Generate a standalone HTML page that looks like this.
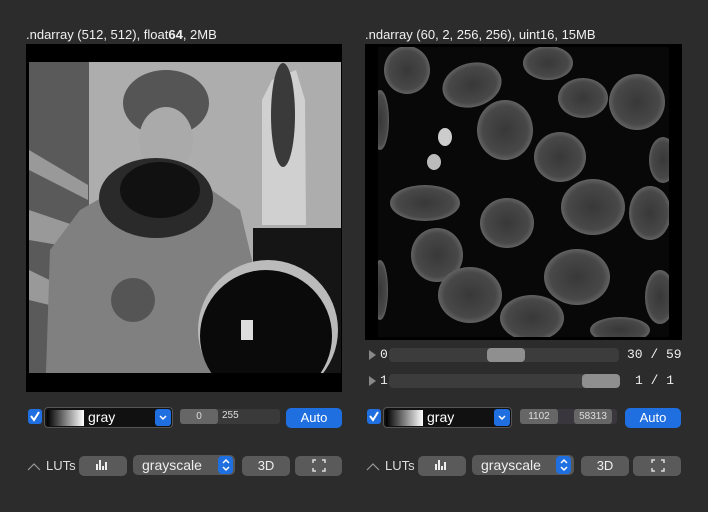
<!DOCTYPE html>
<html><head><meta charset="utf-8"><style>
*{margin:0;padding:0;box-sizing:border-box}
body{width:708px;height:512px;background:#2c2c2c;position:relative;overflow:hidden;font-family:"Liberation Sans",sans-serif;color:#e8e8e8}
.a{position:absolute}
.t{font-size:13px;color:#f0f0f0;top:27px}
.box{background:#000}
.cb{width:14px;height:15px;background:#1f6fe0;border-radius:3px}
.cm{height:21px;border:1px solid #555;border-radius:4px;background:#111}
.gr{background:linear-gradient(90deg,#000,#fff);}
.gt{font-size:14px;color:#fff}
.bb{background:#1f6fe0;border-radius:3px}
.trk{background:#3a3a3a;border-radius:3px}
.hd{background:#666;border-radius:3px;font-size:10px;color:#ddd;text-align:center;line-height:15px}
.auto{background:#1f6fe0;border-radius:5px;color:#fff;font-size:13px;text-align:center;line-height:20px}
.btn{background:#5a5a5a;border-radius:5px;color:#eee;font-size:13px;text-align:center;line-height:20px;height:20px}
.sel{background:#575757;border-radius:5px;color:#eee;font-size:14px;line-height:20px;height:20px;padding-left:9px}
.sl{background:#3c3c3c;border-radius:4px;height:14px}
.sh{background:#8f8f8f;border-radius:4px;height:14px}
.mono{font-family:"Liberation Mono",monospace;font-size:13px;color:#eee}
</style></head><body>
<div class="a t" style="left:26px">.ndarray (512, 512), float<b>64</b>, 2MB</div>
<div class="a t" style="left:365px">.ndarray (60, 2, 256, 256), uint16, 15MB</div>

<div class="a box" style="left:26px;top:44px;width:316px;height:348px"></div>
<svg class="a" style="left:0;top:0" width="708" height="512">
<defs>
<radialGradient id="n" cx="50%" cy="50%" r="50%"><stop offset="0" stop-color="#383838"/><stop offset="0.8" stop-color="#484848"/><stop offset="1" stop-color="#626262"/></radialGradient>
<clipPath id="c1"><rect x="29" y="62" width="312" height="311"/></clipPath>
<clipPath id="c2"><rect x="378" y="47" width="291" height="290"/></clipPath>
</defs>
<g clip-path="url(#c1)">
<rect x="29" y="62" width="312" height="311" fill="#adadad"/>
<rect x="29" y="62" width="60" height="311" fill="#5a5a5a"/>
<path d="M29 150 L88 185 L88 200 L29 170Z M29 210 L88 230 L88 250 L29 240Z M29 270 L70 290 L70 310 L29 300Z" fill="#999"/>
<rect x="253" y="228" width="88" height="145" fill="#151515"/>
<path d="M262 225 L262 100 L272 80 L296 70 L305 100 L306 225Z" fill="#d0d0d0"/>
<ellipse cx="283" cy="115" rx="12" ry="52" fill="#3a3a3a"/>
<path d="M46 373 L50 250 L80 210 L115 190 L200 182 L240 210 L252 260 L253 373Z" fill="#808080"/>
<ellipse cx="166" cy="103" rx="43" ry="33" fill="#555"/>
<ellipse cx="166" cy="140" rx="27" ry="33" fill="#aaa"/>
<ellipse cx="156" cy="198" rx="57" ry="40" fill="#2a2a2a"/>
<ellipse cx="160" cy="190" rx="40" ry="28" fill="#111"/>
<circle cx="133" cy="300" r="22" fill="#555"/>
<circle cx="268" cy="330" r="70" fill="#bbb"/>
<circle cx="266" cy="336" r="66" fill="#0a0a0a"/>
<rect x="241" y="320" width="12" height="20" fill="#ddd"/>
</g>
<rect x="365" y="44" width="317" height="296" fill="#000"/>
<g clip-path="url(#c2)">
<rect x="378" y="47" width="291" height="290" fill="#080808"/>
<g fill="url(#n)">
<ellipse cx="407" cy="70" rx="23" ry="24"/>
<ellipse cx="472" cy="85" rx="30" ry="22" transform="rotate(-15 472 85)"/>
<ellipse cx="548" cy="63" rx="25" ry="17"/>
<ellipse cx="583" cy="98" rx="25" ry="20"/>
<ellipse cx="637" cy="102" rx="28" ry="28"/>
<ellipse cx="505" cy="130" rx="28" ry="30"/>
<ellipse cx="560" cy="157" rx="26" ry="25"/>
<ellipse cx="663" cy="160" rx="14" ry="23"/>
<ellipse cx="425" cy="203" rx="35" ry="18"/>
<ellipse cx="507" cy="223" rx="27" ry="25"/>
<ellipse cx="593" cy="207" rx="32" ry="28"/>
<ellipse cx="650" cy="213" rx="21" ry="27"/>
<ellipse cx="437" cy="255" rx="26" ry="27"/>
<ellipse cx="577" cy="277" rx="33" ry="28"/>
<ellipse cx="470" cy="295" rx="32" ry="28"/>
<ellipse cx="532" cy="318" rx="32" ry="23"/>
<ellipse cx="660" cy="297" rx="15" ry="27"/>
<ellipse cx="620" cy="330" rx="30" ry="13"/>
<ellipse cx="380" cy="120" rx="9" ry="30"/>
<ellipse cx="380" cy="290" rx="8" ry="30"/>
</g>
<ellipse cx="445" cy="137" rx="7" ry="9" fill="#ccc"/>
<ellipse cx="434" cy="162" rx="7" ry="8" fill="#bbb"/>
</g>
</svg>

<!-- sliders -->
<div class="a mono" style="left:380px;top:347px">0</div>
<div class="a sl" style="left:389px;top:348px;width:230px"></div>
<div class="a sh" style="left:487px;top:348px;width:38px"></div>
<div class="a mono" style="left:627px;top:347px">30 / 59</div>
<div class="a mono" style="left:380px;top:373px">1</div>
<div class="a sl" style="left:389px;top:374px;width:230px"></div>
<div class="a sh" style="left:582px;top:374px;width:38px"></div>
<div class="a mono" style="left:635px;top:373px">1 / 1</div>

<!-- left controls -->
<div class="a cb" style="left:28px;top:409px"></div>
<div class="a cm" style="left:44px;top:407px;width:129px"></div>
<div class="a gr" style="left:47px;top:410px;width:37px;height:16px"></div>
<div class="a gt" style="left:88px;top:409px">gray</div>
<div class="a bb" style="left:155px;top:409px;width:16px;height:17px"></div>
<div class="a trk" style="left:180px;top:409px;width:100px;height:15px"></div>
<div class="a hd" style="left:180px;top:409px;width:38px;height:15px">0</div>
<div class="a" style="left:222px;top:410px;font-size:10px;color:#ddd">255</div>
<div class="a auto" style="left:286px;top:408px;width:56px;height:20px">Auto</div>
<div class="a" style="left:46px;top:458px;font-size:13px;color:#ddd">LUTs</div>
<div class="a btn" style="left:79px;top:456px;width:48px"></div>
<div class="a sel" style="left:133px;top:455px;width:102px">grayscale</div>
<div class="a bb" style="left:218px;top:456px;width:15px;height:18px;border-radius:4px"></div>
<div class="a btn" style="left:242px;top:456px;width:48px">3D</div>
<div class="a btn" style="left:295px;top:456px;width:47px"></div>

<!-- right controls -->
<div class="a cb" style="left:367px;top:409px"></div>
<div class="a cm" style="left:383px;top:407px;width:129px"></div>
<div class="a gr" style="left:386px;top:410px;width:37px;height:16px"></div>
<div class="a gt" style="left:427px;top:409px">gray</div>
<div class="a bb" style="left:494px;top:409px;width:16px;height:17px"></div>
<div class="a trk" style="left:520px;top:409px;width:97px;height:15px;background:#3a363e"></div>
<div class="a hd" style="left:520px;top:409px;width:38px;height:15px">1102</div>
<div class="a hd" style="left:574px;top:409px;width:38px;height:15px">58313</div>
<div class="a auto" style="left:625px;top:408px;width:56px;height:20px">Auto</div>
<div class="a" style="left:385px;top:458px;font-size:13px;color:#ddd">LUTs</div>
<div class="a btn" style="left:418px;top:456px;width:48px"></div>
<div class="a sel" style="left:472px;top:455px;width:102px">grayscale</div>
<div class="a bb" style="left:556px;top:456px;width:15px;height:18px;border-radius:4px"></div>
<div class="a btn" style="left:581px;top:456px;width:48px">3D</div>
<div class="a btn" style="left:633px;top:456px;width:48px"></div>

<svg class="a" style="left:0;top:0" width="708" height="512">
<path d="M369 350 L376 355 L369 360Z M369 376 L376 381 L369 386Z" fill="#888"/>
<path d="M28 470 L34 464 L40 470 M367 470 L373 464 L379 470" stroke="#999" stroke-width="1.2" fill="none"/>
<g fill="none" stroke="#fff" stroke-width="2"><path d="M31 416 L34 420 L39 412 M370 416 L373 420 L378 412"/></g>
<g fill="none" stroke="#fff" stroke-width="1.5"><path d="M160 416 L163 419 L166 416 M499 416 L502 419 L505 416"/>
<path d="M223 463 L226 460 L229 463 M223 467 L226 470 L229 467 M561 463 L564 460 L567 463 M561 467 L564 470 L567 467"/></g>
<g fill="#eee"><rect x="96" y="464" width="2" height="6"/><rect x="99" y="460" width="2" height="10"/><rect x="102" y="466" width="2" height="4"/><rect x="105" y="462" width="2" height="8"/>
<rect x="435" y="464" width="2" height="6"/><rect x="438" y="460" width="2" height="10"/><rect x="441" y="466" width="2" height="4"/><rect x="444" y="462" width="2" height="8"/></g>
<g fill="none" stroke="#ddd" stroke-width="1.5"><path d="M313 463 v-3 h3 M322 460 h3 v3 M325 468 v3 h-3 M316 471 h-3 v-3 M652 463 v-3 h3 M661 460 h3 v3 M664 468 v3 h-3 M655 471 h-3 v-3"/></g>
</svg>
</body></html>
